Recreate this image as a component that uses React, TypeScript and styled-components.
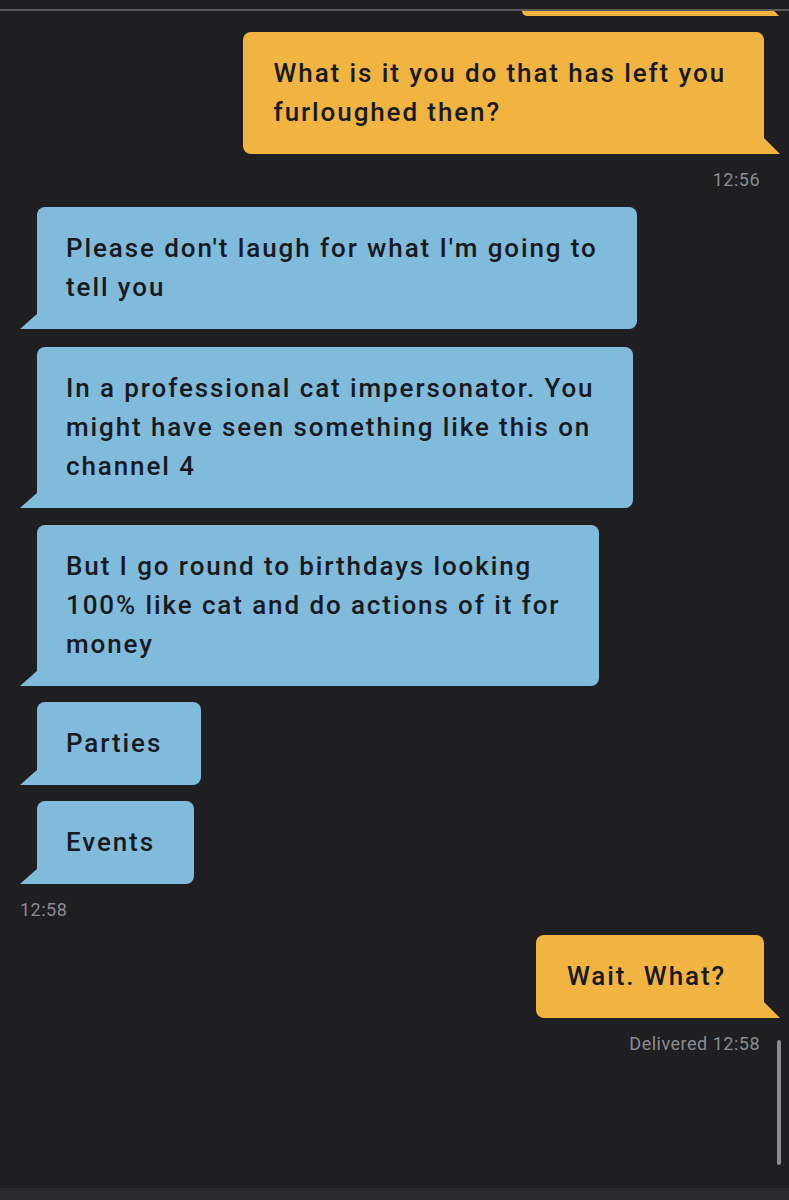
import React from "react";
import styled, { createGlobalStyle, css } from "styled-components";

const GlobalStyle = createGlobalStyle`
  html, body { margin: 0; padding: 0; background: #1f1f21; }
  * { box-sizing: border-box; }
`;

const YELLOW = "#f1b441";
const BLUE = "#80bbdc";

const Screen = styled.div`
  width: 789px;
  height: 1200px;
  display: flex;
  flex-direction: column;
  background: #1f1f21;
  font-family: Roboto, "Noto Sans", sans-serif;
  overflow: hidden;
`;

const TopBar = styled.div`
  height: 11px;
  flex: none;
  background: #1e1e20;
  border-bottom: 2px solid #5a5a5d;
`;

const Thread = styled.div`
  position: relative;
  flex: 1;
  display: flex;
  flex-direction: column;
  overflow: hidden;
`;

const BottomBar = styled.div`
  height: 12px;
  flex: none;
  background: #2a2a2c;
`;

const Row = styled.div<{ $out?: boolean; $mt: number }>`
  display: flex;
  justify-content: ${(p) => (p.$out ? "flex-end" : "flex-start")};
  margin-top: ${(p) => p.$mt}px;
  padding: ${(p) => (p.$out ? "0 25px 0 0" : "0 0 0 37px")};
`;

const tail = (out?: boolean) =>
  out
    ? css`
        border-radius: 8px 8px 0 8px;
        &::after {
          content: "";
          position: absolute;
          right: -16px;
          bottom: 0;
          width: 17px;
          height: 17px;
          background: inherit;
          clip-path: polygon(0 0, 100% 100%, 0 100%);
        }
      `
    : css`
        border-radius: 8px 8px 8px 0;
        &::after {
          content: "";
          position: absolute;
          left: -17px;
          bottom: 0;
          width: 18px;
          height: 16px;
          background: inherit;
          clip-path: polygon(100% 0, 100% 100%, 0 100%);
        }
      `;

const Bubble = styled.div<{ $out?: boolean }>`
  position: relative;
  background: ${(p) => (p.$out ? YELLOW : BLUE)};
  color: #181a1f;
  font-size: 26px;
  font-weight: 500;
  letter-spacing: 1.9px;
  line-height: 39px;
  padding: ${(p) => (p.$out ? "22px 38px 22px 31px" : "22px 39px 22px 29px")};
  ${(p) => tail(p.$out)}
`;

const Line = styled.div`
  white-space: nowrap;
`;

const Peek = styled.div`
  position: relative;
  align-self: flex-end;
  margin-right: 25px;
  width: 242px;
  height: 5px;
  background: ${YELLOW};
  border-radius: 0 0 0 5px;
  &::after {
    content: "";
    position: absolute;
    right: -15px;
    bottom: 0;
    width: 16px;
    height: 5px;
    background: inherit;
    clip-path: polygon(0 0, 70% 0, 100% 100%, 0 100%);
  }
`;

const Stamp = styled.div<{ $out?: boolean; $mt: number }>`
  margin-top: ${(p) => p.$mt}px;
  height: 20px;
  line-height: 20px;
  font-size: 18px;
  letter-spacing: 0.5px;
  color: #8b8b90;
  text-align: ${(p) => (p.$out ? "right" : "left")};
  padding: ${(p) => (p.$out ? "0 29px 0 0" : "0 0 0 20px")};
`;

const ScrollThumb = styled.div`
  position: absolute;
  right: 8px;
  top: 1029px;
  width: 4px;
  height: 125px;
  border-radius: 2px;
  background: #8c8c8f;
`;

type Msg = { out?: boolean; lines: string[]; mt: number };

const Message = ({ out, lines, mt }: Msg) => (
  <Row $out={out} $mt={mt}>
    <Bubble $out={out}>
      {lines.map((l, i) => (
        <Line key={i}>{l}</Line>
      ))}
    </Bubble>
  </Row>
);

export default function App() {
  return (
    <>
      <GlobalStyle />
      <Screen>
        <TopBar />
        <Thread>
          <Peek />
          <Message
            out
            mt={16}
            lines={["What is it you do that has left you", "furloughed then?"]}
          />
          <Stamp $out $mt={16}>12:56</Stamp>
          <Message
            mt={17}
            lines={["Please don't laugh for what I'm going to", "tell you"]}
          />
          <Message
            mt={18}
            lines={[
              "In a professional cat impersonator. You",
              "might have seen something like this on",
              "channel 4",
            ]}
          />
          <Message
            mt={17}
            lines={[
              "But I go round to birthdays looking",
              "100% like cat and do actions of it for",
              "money",
            ]}
          />
          <Message mt={16} lines={["Parties"]} />
          <Message mt={16} lines={["Events"]} />
          <Stamp $mt={16}>12:58</Stamp>
          <Message out mt={15} lines={["Wait. What?"]} />
          <Stamp $out $mt={16}>Delivered 12:58</Stamp>
          <ScrollThumb />
        </Thread>
        <BottomBar />
      </Screen>
    </>
  );
}
